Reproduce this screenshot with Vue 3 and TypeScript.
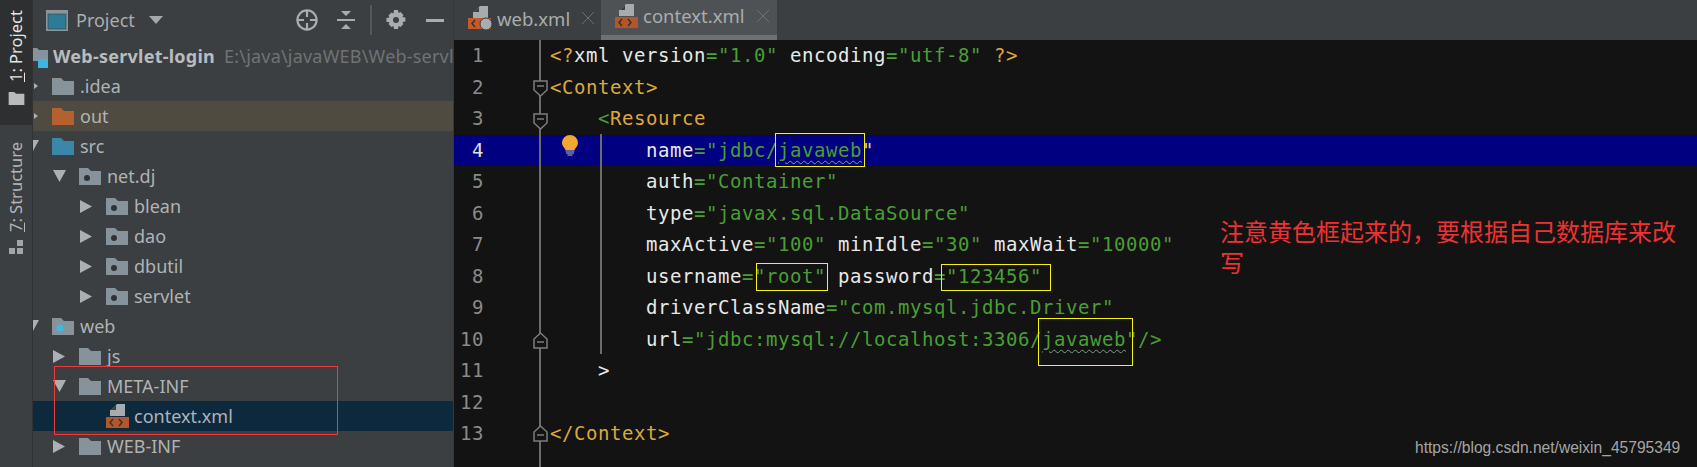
<script setup lang="ts">
type Seg = [string, string]
interface Row { label: string; depth: number; icon: string; arrow?: string; cls?: string }

const rows: Row[] = [
  { label: '.idea', depth: 0, icon: 'idea', arrow: 'small' },
  { label: 'out', depth: 0, icon: 'out', arrow: 'small', cls: 'excluded' },
  { label: 'src', depth: 0, icon: 'src', arrow: 'down' },
  { label: 'net.dj', depth: 1, icon: 'pkg', arrow: 'down' },
  { label: 'blean', depth: 2, icon: 'pkg', arrow: 'right' },
  { label: 'dao', depth: 2, icon: 'pkg', arrow: 'right' },
  { label: 'dbutil', depth: 2, icon: 'pkg', arrow: 'right' },
  { label: 'servlet', depth: 2, icon: 'pkg', arrow: 'right' },
  { label: 'web', depth: 0, icon: 'web', arrow: 'down' },
  { label: 'js', depth: 1, icon: 'plain', arrow: 'right' },
  { label: 'META-INF', depth: 1, icon: 'plain', arrow: 'down' },
  { label: 'context.xml', depth: 2, icon: 'xml', cls: 'selected' },
  { label: 'WEB-INF', depth: 1, icon: 'plain', arrow: 'right' },
]

const lines: Seg[][] = [
  [['tag', '<?'], ['attr', 'xml version'], ['str', '="1.0"'], ['attr', ' encoding'], ['str', '="utf-8"'], ['tag', ' ?>']],
  [['tag', '<Context>']],
  [['str', '    <'], ['tag', 'Resource']],
  [['attr', '        name'], ['str', '="jdbc/'], ['wavy', 'javaweb'], ['attr2', '"']],
  [['attr', '        auth'], ['str', '="Container"']],
  [['attr', '        type'], ['str', '="javax.sql.DataSource"']],
  [['attr', '        maxActive'], ['str', '="100"'], ['attr', ' minIdle'], ['str', '="30"'], ['attr', ' maxWait'], ['str', '="10000"']],
  [['attr', '        username'], ['str', '="root"'], ['attr', ' password'], ['str', '="123456"']],
  [['attr', '        driverClassName'], ['str', '="com.mysql.jdbc.Driver"']],
  [['attr', '        url'], ['str', '="jdbc:mysql://localhost:3306/'], ['wavy', 'javaweb'], ['str', '"/>']],
  [['attr', '    >']],
  [],
  [['tag', '</Context>']],
]

const foldOpen = [2, 3]
const foldClose = [10, 13]
</script>

<template>
  <div class="screen">
    <svg class="defs" width="0" height="0">
      <symbol id="folder" viewBox="0 0 22 17">
        <path d="M0 0h9l3 3h10v14H0z" fill="currentColor" />
      </symbol>
      <symbol id="pkg" viewBox="0 0 22 17">
        <path d="M0 0h9l3 3h10v14H0z" fill="currentColor" />
        <circle cx="8" cy="10" r="3" fill="#2f3336" />
      </symbol>
      <symbol id="webf" viewBox="0 0 22 17">
        <path d="M0 0h9l3 3h10v14H0z" fill="currentColor" />
        <circle cx="8" cy="10" r="3.6" fill="#3fb8e6" />
      </symbol>
      <symbol id="xmlf" viewBox="0 0 23 24">
        <path d="M11 0h8v12H4V6h1z" fill="#a5abae" />
        <path d="M10 1v5H5z" fill="#3c3f41" />
        <rect x="0" y="13" width="23" height="11" fill="#b3562a" />
        <path d="M7 15l-3 3.5L7 22M13 15l3 3.5L13 22" fill="none" stroke="#33302e" stroke-width="1.4" />
      </symbol>
    </svg>

    <aside class="stripe">
      <div class="stripe-tab active">
        <span class="vtext"><u>1</u>: Project</span>
        <svg class="stripe-icon" width="17" height="14" viewBox="0 0 17 14"><path d="M0 0h6l2 2h9v12H0z" fill="#b9babb" /></svg>
      </div>
      <div class="stripe-tab second">
        <span class="vtext"><u>7</u>: Structure</span>
        <svg class="stripe-icon" width="15" height="15" viewBox="0 0 15 15" fill="#a3a6a8"><rect x="8" y="0" width="6" height="6" /><rect x="0" y="8" width="6" height="6" /><rect x="8" y="8" width="6" height="6" /></svg>
      </div>
    </aside>

    <section class="panel">
      <header class="panel-head">
        <svg width="22" height="21" viewBox="0 0 22 21"><rect width="22" height="21" fill="#8b9498" /><rect x="2" y="4" width="18" height="15" fill="#2e7a99" stroke="#3b3f41" stroke-width="0.6" /></svg>
        <span class="panel-title">Project</span>
        <svg class="caret" width="14" height="8" viewBox="0 0 14 8"><path d="M0 0h14L7 8z" fill="#a3a8ab" /></svg>
        <div class="head-tools">
          <svg width="22" height="22" viewBox="0 0 22 22" fill="none" stroke="#a9adaf" stroke-width="2.2"><circle cx="11" cy="11" r="9.6" /><path d="M11 1v7M11 14v7M1 11h7M14 11h7" /></svg>
          <svg class="t-collapse" width="18" height="18" viewBox="0 0 18 18" fill="#a9adaf"><path d="M0 8h18v2H0zM4 0h10L9 5zM4 18h10L9 13z" /></svg>
          <i class="sep"></i>
          <svg width="20" height="20" viewBox="0 0 20 20" fill="#a9adaf"><path fill-rule="evenodd" d="M8 0h4l.6 3 2-.9 2.8 2.8-1 2 3 .6v4l-3 .6 1 2-2.8 2.8-2-1-.6 3.1H8l-.6-3-2 1-2.8-2.9 1-2L.5 12V8l3-.6-1-2 2.900-2.800 2 .9zM10 7a3 3 0 100 6 3 3 0 000-6z" /></svg>
          <svg class="t-min" width="18" height="3" viewBox="0 0 18 3"><rect width="18" height="3" fill="#a9adaf" /></svg>
        </div>
      </header>

      <div class="tree-row root-row">
        <svg class="root-icon" width="16" height="22" viewBox="0 0 16 22"><path d="M0 0h4l2 2h9v11H0z" fill="#87939a" /><rect x="5" y="11" width="10" height="9" fill="#3db4e4" /></svg>
        <b>Web-servlet-login</b>
        <span class="path">E:\java\javaWEB\Web-servl</span>
      </div>

      <div v-for="r in rows" :key="r.label" class="tree-row" :class="r.cls">
        <span class="arrow-slot" :style="{ marginLeft: r.depth * 27 - 7 + 'px' }">
          <svg v-if="r.arrow === 'right'" width="12" height="13" viewBox="0 0 12 13"><path d="M0 0l12 6.500L0 13z" fill="#aab0b3" /></svg>
          <svg v-else-if="r.arrow === 'down'" width="13" height="12" viewBox="0 0 13 12"><path d="M0 0h13L6.500 12z" fill="#aab0b3" /></svg>
          <svg v-else-if="r.arrow === 'small'" class="small-arrow" width="4" height="6" viewBox="0 0 4 6"><path d="M0 0l4 3-4 3z" fill="#aab0b3" /></svg>
        </span>
        <svg v-if="r.icon === 'xml'" class="ic xml-ic" width="23" height="24"><use href="#xmlf" /></svg>
        <svg v-else class="ic" :class="'c-' + r.icon" width="22" height="17">
          <use :href="r.icon === 'pkg' ? '#pkg' : r.icon === 'web' ? '#webf' : '#folder'" />
        </svg>
        <span class="label">{{ r.label }}</span>
      </div>
    </section>

    <main class="editor">
      <nav class="tabs">
        <div class="tab">
          <svg class="tab-ic" width="24" height="24" viewBox="0 0 24 24">
            <path d="M12 0h8v12H5V6h1z" fill="#a5abae" /><path d="M11 1v5H6z" fill="#3c3f41" />
            <rect y="12" width="23" height="11" fill="#c4592a" />
            <circle cx="18" cy="18" r="6" fill="#a9adaf" stroke="#3c3f41" />
            <path d="M7 14l-3 3.500L7 21" fill="none" stroke="#33302e" stroke-width="1.400" />
          </svg>
          <span>web.xml</span><em class="close"></em>
        </div>
        <div class="tab on">
          <svg class="tab-ic" width="23" height="24"><use href="#xmlf" /></svg>
          <span>context.xml</span><em class="close"></em>
        </div>
      </nav>

      <div class="code">
        <div v-for="(segs, i) in lines" :key="i" class="line" :class="{ current: i === 3 }">
          <span class="num">{{ i + 1 }}</span>
          <span class="text"><span v-for="(s, j) in segs" :key="j" :class="s[0]">{{ s[1] }}</span></span>
        </div>
        <i class="guide outer"></i>
        <i class="guide inner"></i>
        <svg v-for="n in foldOpen" :key="'o' + n" class="fold" :class="'f' + n" width="15" height="17" viewBox="0 0 15 17">
          <path d="M1 1h13v9l-6.500 6L1 10z" fill="#131313" stroke="#7d7d7d" stroke-width="1.500" /><path d="M4 6h7" stroke="#7d7d7d" stroke-width="1.500" />
        </svg>
        <svg v-for="n in foldClose" :key="'c' + n" class="fold" :class="'f' + n" width="15" height="17" viewBox="0 0 15 17">
          <path d="M1 16h13V7L7.500 1 1 7z" fill="#131313" stroke="#7d7d7d" stroke-width="1.500" /><path d="M4 10h7" stroke="#7d7d7d" stroke-width="1.500" />
        </svg>
        <svg class="bulb" width="16" height="21" viewBox="0 0 16 21">
          <path d="M8 0a8 8 0 018 8c0 3-2.500 4.500-3.500 7h-9C2.500 12.500 0 11 0 8a8 8 0 018-8z" fill="#f2a72e" />
          <path d="M3.500 16h9M4 18h8M5.500 20h5" stroke="#b9b9cf" stroke-width="1.200" />
        </svg>
      </div>
    </main>

    <i class="mark red"></i>
    <i class="mark y1"></i>
    <i class="mark y2"></i>
    <i class="mark y3"></i>
    <i class="mark y4"></i>
    <p class="note">注意黄色框起来的，要根据自己数据库来改写</p>
    <span class="watermark">https://blog.csdn.net/weixin_45795349</span>
  </div>
</template>

<style>
html, body { margin: 0; background: #131313; }
</style>

<style scoped>
.screen {
  position: relative;
  display: flex;
  width: 1697px;
  height: 467px;
  overflow: hidden;
  background: #131313;
  font-family: "Noto Sans", "Liberation Sans", sans-serif;
}
.defs { position: absolute; }

.stripe {
  flex: 0 0 32px;
  display: flex;
  flex-direction: column;
  background: #3c3f41;
  border-right: 1px solid #323232;
  color: #b4b6b8;
}
.stripe-tab {
  display: flex;
  flex-direction: column;
  align-items: center;
  gap: 10px;
  padding: 10px 0 20px;
}
.stripe-tab.second { padding-top: 17px; gap: 8px; }
.stripe-tab.active { background: #2d2f30; color: #e6e6e6; height: 95px; }
.vtext {
  writing-mode: vertical-rl;
  transform: rotate(180deg);
  font-size: 16.5px;
  line-height: 32px;
  white-space: nowrap;
}

.panel {
  flex: 0 0 420px;
  min-width: 0;
  overflow: hidden;
  background: #3c3f41;
  color: #afb3b6;
  font-size: 18px;
  border-right: 1px solid #36393b;
}
.panel-head {
  display: flex;
  align-items: center;
  height: 40px;
  padding-left: 13px;
  box-sizing: border-box;
}
.panel-title { margin-left: 8px; font-size: 18px; color: #a9adaf; }
.caret { margin-left: 14px; }
.head-tools {
  display: flex;
  align-items: center;
  margin-left: 133px;
}
.t-collapse { margin-left: 19px; }
.sep { width: 2px; height: 30px; margin: 0 14px 0 15px; background: #55585a; }
.t-min { margin-left: 20px; }

.tree-row {
  display: flex;
  align-items: center;
  height: 30px;
  white-space: nowrap;
  overflow: hidden;
  box-sizing: border-box;
}
.tree-row.excluded { background: #4f4b41; }
.tree-row.selected { background: #0d293e; }
.root-row { height: 31px; }
.root-icon { flex: none; margin-top: 6px; }
.root-row b { margin-left: 4px; color: #b8bcbe; letter-spacing: 0.25px; }
.path { margin-left: 9px; color: #6f7375; letter-spacing: 0.2px; }
.arrow-slot {
  flex: 0 0 26px;
  display: flex;
  align-items: center;
}
.small-arrow { margin-left: 8px; }
.ic { flex: none; }
.c-idea, .c-pkg, .c-plain, .c-web { color: #87939a; }
.c-out { color: #b5602f; }
.c-src { color: #3a87a7; }
.label { margin-left: 6px; }
.xml-ic + .label { margin-left: 5px; }

.editor {
  flex: 1;
  min-width: 0;
  display: flex;
  flex-direction: column;
}
.tabs {
  display: flex;
  height: 40px;
  background: #3c3f41;
  color: #a9adaf;
  font-size: 18.500px;
  box-sizing: border-box;
}
.tab {
  display: flex;
  align-items: center;
  width: 147px;
  padding: 0 0 4px 14px;
  box-sizing: border-box;
  height: 40px;
}
.tab.on {
  width: 176px;
  background: #4e5254;
  border-bottom: 5px solid #6d7173;
}
.tab span { margin-left: 5px; }
.tab-ic { flex: none; }
.close {
  position: relative;
  width: 12px;
  height: 12px;
  margin-left: 12px;
  flex: none;
  background:
    linear-gradient(45deg, transparent 46%, #6d7073 46%, #6d7073 54%, transparent 54%),
    linear-gradient(-45deg, transparent 46%, #6d7073 46%, #6d7073 54%, transparent 54%);
}

.code {
  position: relative;
  flex: 1;
  font-family: "DejaVu Sans Mono", "Liberation Mono", monospace;
  font-size: 19px;
  letter-spacing: 0.560px;
}
.line {
  display: flex;
  height: 31.500px;
  line-height: 31.500px;
  white-space: pre;
}
.line.current { background: #000080; }
.num {
  flex: 0 0 30px;
  text-align: right;
  color: #8a8a8a;
  margin-right: 66px;
}
.current .num { color: #e0e0e0; }
.attr { color: #e8e8e8; }
.attr2 { color: #e8d37a; }
.tag { color: #dca83c; }
.str, .wavy { color: #4a9e35; }
.wavy { text-decoration: underline wavy #7f9f85 1px; text-underline-offset: 3px; }

.guide { position: absolute; width: 2px; background: #6c6c6c; }
.guide.outer { left: 85px; top: 0; bottom: 0; }
.guide.inner { left: 146px; top: 94px; height: 220px; }
.fold { position: absolute; left: 79px; }
.f2 { top: 40px; }
.f3 { top: 73px; }
.f10 { top: 292px; }
.f13 { top: 385px; }
.bulb { position: absolute; left: 108px; top: 95px; }

.mark { position: absolute; box-sizing: border-box; border: 1.500px solid #f5f50a; }
.mark.red { left: 54px; top: 366px; width: 284px; height: 69px; border-color: #f03a3a; }
.y1 { left: 775px; top: 133px; width: 90px; height: 34px; }
.y2 { left: 756px; top: 263px; width: 72px; height: 28px; }
.y3 { left: 941px; top: 264px; width: 110px; height: 27px; }
.y4 { left: 1038px; top: 318px; width: 95px; height: 48px; }

.note {
  position: absolute;
  left: 1220px;
  top: 215px;
  width: 470px;
  margin: 0;
  color: #ee3232;
  font-family: "Noto Sans CJK SC", sans-serif;
  font-size: 24px;
  line-height: 31px;
}
.watermark {
  position: absolute;
  left: 1415px;
  top: 438px;
  color: #a5a5a5;
  font-family: "Liberation Sans", sans-serif;
  font-size: 15.6px;
  line-height: 20px;
  white-space: nowrap;
}
</style>
